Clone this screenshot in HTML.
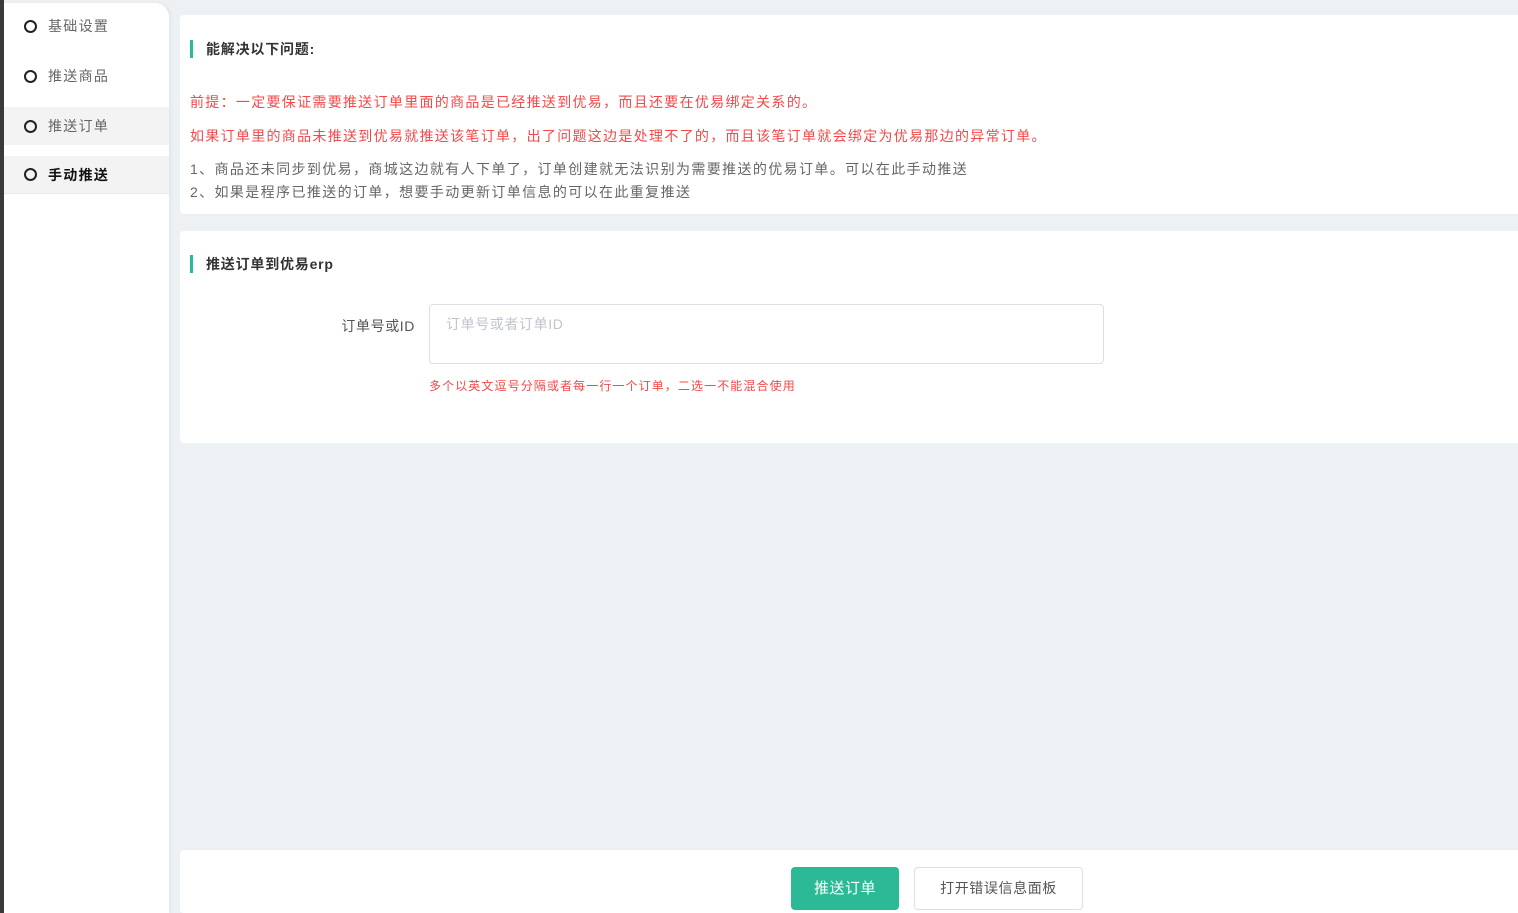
<!DOCTYPE html>
<html><head><meta charset="utf-8"><style>
*{margin:0;padding:0;box-sizing:border-box}
body{width:1518px;height:913px;overflow:hidden;background:#eef1f4;font-family:"Liberation Sans","Noto Sans CJK SC",sans-serif;position:relative;font-size:14px;color:#555;letter-spacing:1.3px}
.strip{position:absolute;left:0;top:0;width:4px;height:913px;background:#3a3a3a}
.side{position:absolute;left:4px;top:3px;width:165px;height:910px;background:#fff;border-top-right-radius:14px;box-shadow:2px 0 4px rgba(0,0,0,.05)}
.item{position:absolute;left:0;width:165px;height:38px;display:flex;align-items:center;padding-left:20px;color:#666;font-size:14px}
.item i{width:13px;height:13px;border:2px solid #222;border-radius:50%;margin-right:11px}
.card{position:absolute;left:180px;background:#fff;border-radius:4px 0 0 4px;width:1338px}
.title{position:absolute;left:10px;font-weight:bold;color:#333;font-size:14px;padding-left:13px;border-left:3px solid #2bb996;line-height:18px;letter-spacing:0.8px}
.red{color:#f5484a;position:absolute;left:10px;font-size:14px}
.gray{color:#666;position:absolute;left:10px;font-size:14px;line-height:23px;letter-spacing:1.38px}
</style></head><body>
<div class="strip"></div>
<div class="side">
<div class="item" style="top:4px"><i></i>基础设置</div>
<div class="item" style="top:54px"><i></i>推送商品</div>
<div class="item" style="top:104px;background:#f3f3f3"><i></i>推送订单</div>
<div class="item" style="top:153px;background:#f3f3f3;color:#111;font-weight:bold;border-bottom:1px solid #eaeaea"><i></i>手动推送</div>
</div>
<div class="card" style="top:15px;height:199px">
<div class="title" style="top:25px">能解决以下问题:</div>
<div class="red" style="top:77px">前提：一定要保证需要推送订单里面的商品是已经推送到优易，而且还要在优易绑定关系的。</div>
<div class="red" style="top:111px">如果订单里的商品未推送到优易就推送该笔订单，出了问题这边是处理不了的，而且该笔订单就会绑定为优易那边的异常订单。</div>
<div class="gray" style="top:143px">1、商品还未同步到优易，商城这边就有人下单了，订单创建就无法识别为需要推送的优易订单。可以在此手动推送<br>2、如果是程序已推送的订单，想要手动更新订单信息的可以在此重复推送</div>
</div>
<div class="card" style="top:231px;height:212px">
<div class="title" style="top:24px">推送订单到优易erp</div>
<div style="position:absolute;right:1103px;top:85px;color:#555;letter-spacing:0.6px">订单号或ID</div>
<div style="position:absolute;left:249px;top:73px;width:675px;height:60px;border:1px solid #dcdfe6;border-radius:4px;padding:9px 16px;color:#c0c4cc;letter-spacing:0.6px">订单号或者订单ID</div>
<div style="position:absolute;left:249px;top:146px;color:#f5484a;font-size:12px;letter-spacing:1.1px">多个以英文逗号分隔或者每一行一个订单，二选一不能混合使用</div>
</div>
<div class="card" style="top:850px;height:63px">
<div style="position:absolute;left:611px;top:17px;width:108px;height:43px;background:#2bb996;border-radius:4px;color:#fff;text-align:center;line-height:43px;font-size:15px;letter-spacing:0.5px">推送订单</div>
<div style="position:absolute;left:734px;top:17px;width:169px;height:43px;border:1px solid #dcdfe6;border-radius:4px;color:#555;text-align:center;line-height:41px;letter-spacing:0.6px">打开错误信息面板</div>
</div>
</body></html>
